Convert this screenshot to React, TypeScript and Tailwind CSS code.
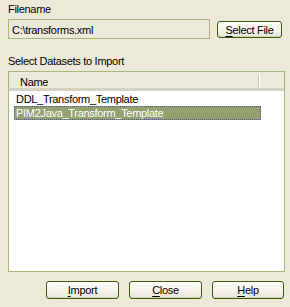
import React from 'react';

function XpButton({ label, hot, className }: { label: string; hot: number; className: string }) {
    return (
        <button
            className={`flex items-center justify-center rounded-[3px] border border-[#3a5a08] bg-gradient-to-b from-[#fefefb] via-[#f6f5ec] to-[#e7e5d4] text-[11px] leading-[14px] tracking-[-0.3px] text-black shadow-[inset_0_-1px_0_#d8d5c0,inset_0_1px_0_#ffffff] ${className}`}
        >
            <span>
                {label.slice(0, hot)}
                <span className="underline underline-offset-[2px]">{label[hot]}</span>
                {label.slice(hot + 1)}
            </span>
        </button>
    );
}

export default function App() {
    return (
        <div
            className="relative h-[307px] w-[290px] overflow-hidden bg-[#ece9d8] text-[11px] leading-[14px] tracking-[-0.3px] text-black"
            style={{ fontFamily: '"Liberation Sans", Arial, sans-serif' }}
        >
            <div className="pl-2 pt-[2px]">Filename</div>

            {/* File row */}
            <div className="mt-[3px] flex items-start pl-2">
                <div className="h-[20px] w-[202px] border border-[#a5b97f] bg-[#ece9d8] pl-[3px] pt-[3px]">
                    C:\transforms.xml
                </div>
                <XpButton label="Select File" hot={0} className="ml-[7px] mt-[2px] h-[17px] w-[65px]" />
            </div>

            <div className="mt-[15px] pl-2">Select Datasets to Import</div>

            {/* Dataset list */}
            <div className="ml-2 mt-[3px] h-[201px] w-[277px] border border-[#a5b97f] bg-white">
                <div className="relative flex h-[19px] items-start border-b-[3px] border-[#d6d2c2] bg-[#ebeadb] pl-[11px] pt-[3px]">
                    <span>Name</span>
                    <span className="absolute left-[249px] top-[2px] h-[13px] w-[2px] border-l border-r border-l-[#c7c5b2] border-r-white" />
                </div>
                <div className="pl-[5px] pt-[1px]">
                    <div className="h-[14px] pl-[2px]">DDL_Transform_Template</div>
                    <div className="h-[14px] w-[247px] border border-dotted border-[#55598a] bg-[#93a070] pl-[1px] text-white">
                        <span className="relative top-[-1px]">PIM2Java_Transform_Template</span>
                    </div>
                </div>
            </div>

            {/* Action buttons */}
            <div className="mt-[9px] flex gap-[10px] pl-[46px]">
                <XpButton label="Import" hot={0} className="h-[18px] w-[73px]" />
                <XpButton label="Close" hot={0} className="h-[18px] w-[73px]" />
                <XpButton label="Help" hot={0} className="h-[18px] w-[72px]" />
            </div>
        </div>
    );
}
